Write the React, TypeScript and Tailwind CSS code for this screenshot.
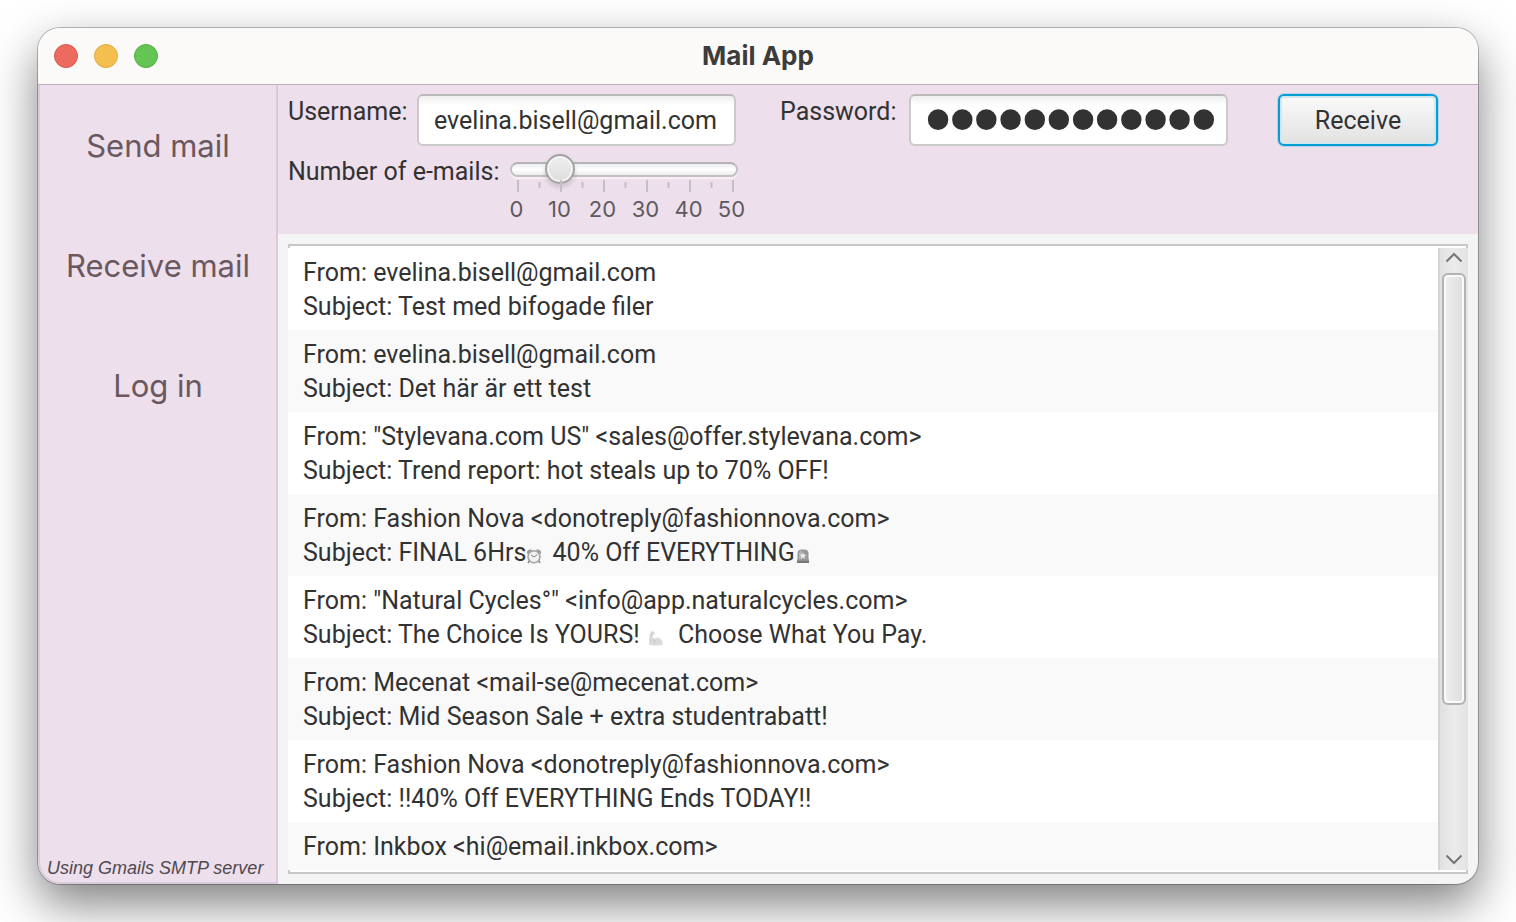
import { useState } from "react";
import type { ReactNode } from "react";

function AlarmClock() {
  return (
    <svg viewBox="0 0 16 16" className="mr-1 inline-block size-4 align-[-3px]" aria-label="alarm clock">
      <path d="M1 5.500C.4 2.500 3.500.8 6 2L2.300 6zM15 5.500C15.600 2.500 12.500.8 10 2l3.700 4z" fill="#9a9a9a" />
      <path d="M3.500 12.500 2 15M12.500 12.500 14 15" stroke="#888" strokeWidth="1.500" />
      <circle cx="8" cy="8.800" r="6" fill="#f1f1f1" stroke="#a2a2a2" strokeWidth="1.600" />
      <path d="M5 7l3 2 3.500-2.500" fill="none" stroke="#777" strokeWidth=".9" />
    </svg>
  );
}

function Siren() {
  return (
    <svg viewBox="0 0 14 16" className="ml-px inline-block h-4 w-3.5 align-[-3px]" aria-label="siren">
      <path d="M1.500 12V5c0-2 1.500-3.500 4-3.500h3c2.500 0 4 1.500 4 3.500v7z" fill="#999" />
      <path d="M3 11V5c0-1.500 1-2.300 3-2.300V11z" fill="#b5b5b5" />
      <path d="m7 4 .9 2.500 2.600.3-2 1.600.5 2.600L7 9.600 4.900 11l.6-2.600-2-1.600 2.600-.3z" fill="#ececec" />
      <path d="M1 11.500h12V15H1z" fill="#777" />
      <path d="M1 12h12" stroke="#aaa" />
    </svg>
  );
}

function FlexedArm() {
  return (
    <svg viewBox="0 0 16 16" className="mx-2 inline-block size-4 align-[-3px]" aria-label="flexed arm">
      <path
        d="M2.500 2.500C3 1 5.500.8 6.500 2c.6.900.3 2.300-.7 2.600l-1 .5.7 4.200C7 7.500 10.500 7 12.500 9c2 1.600 2.800 3.900 2 5.500-3.500 1.300-9.500 1.200-13.200.2C.6 11 1 6 2.500 2.500z"
        fill="#dadada"
      />
      <path d="M5.500 9.300c.3 1.200 1 1.700 2 1.700M4.600 4.800l-1.300-.6" fill="none" stroke="#b2b2b2" strokeWidth=".8" />
    </svg>
  );
}

type Mail = { from: string; subject: ReactNode };

const mails: Mail[] = [
  { from: "evelina.bisell@gmail.com", subject: "Test med bifogade filer" },
  { from: "evelina.bisell@gmail.com", subject: "Det här är ett test" },
  { from: '"Stylevana.com US" <sales@offer.stylevana.com>', subject: "Trend report: hot steals up to 70% OFF!" },
  {
    from: "Fashion Nova <donotreply@fashionnova.com>",
    subject: (
      <>
        FINAL 6Hrs
        <AlarmClock /> 40% Off EVERYTHING
        <Siren />
      </>
    ),
  },
  {
    from: '"Natural Cycles°" <info@app.naturalcycles.com>',
    subject: (
      <>
        The Choice Is YOURS!
        <FlexedArm /> Choose What You Pay.
      </>
    ),
  },
  { from: "Mecenat <mail-se@mecenat.com>", subject: "Mid Season Sale + extra studentrabatt!" },
  { from: "Fashion Nova <donotreply@fashionnova.com>", subject: "‼40% Off EVERYTHING Ends TODAY‼" },
  { from: "Inkbox <hi@email.inkbox.com>", subject: "" },
];

const navItems = ["Send mail", "Receive mail", "Log in"];
const scale = [0, 10, 20, 30, 40, 50];

const fieldClass =
  "h-[52px] w-[319px] rounded-md border-2 border-[#cacaca] border-t-[#b9b9b9] bg-white bg-linear-to-b from-[#f0f0f0] to-white to-20% pr-2 pl-[15px] text-[#323232] outline-none";

function CountSlider() {
  const [count, setCount] = useState(10);
  return (
    <div className="w-[258px]">
      <div className="grid items-center justify-items-center">
        <div className="h-[15px] w-[228px] rounded-full border-2 border-[#c2bfc2] border-t-[#b6b3b6] bg-linear-to-b from-[#ececec] via-white to-[#ececec] shadow-[0_2px_0_#f6eff6] [grid-area:1/1]" />
        <input
          id="count"
          type="range"
          min={0}
          max={50}
          value={count}
          onChange={(e) => setCount(Number(e.target.value))}
          className="h-[30px] w-[245px] cursor-pointer appearance-none bg-transparent outline-none [grid-area:1/1] [&::-webkit-slider-thumb]:size-[30px] [&::-webkit-slider-thumb]:appearance-none [&::-webkit-slider-thumb]:rounded-full [&::-webkit-slider-thumb]:border-2 [&::-webkit-slider-thumb]:border-[#a3a3a3] [&::-webkit-slider-thumb]:bg-linear-to-b [&::-webkit-slider-thumb]:from-[#f0f0f0] [&::-webkit-slider-thumb]:to-[#dcdcdc] [&::-webkit-slider-thumb]:shadow-[0_3px_5px_rgba(0,0,0,0.15),inset_0_0_0_2px_#f4f4f4]"
        />
      </div>
      <svg viewBox="0 0 258 12" className="-mt-1 h-3 w-full" aria-hidden="true">
        {scale.map((v) => (
          <path key={v} d={`M${23 + v * 4.3} 0v12`} stroke="#c3bfc3" strokeWidth="2" />
        ))}
        {scale.slice(0, 5).map((v) => (
          <path key={v} d={`M${44.5 + v * 4.3} 2v6`} stroke="#c3bfc3" strokeWidth="2" />
        ))}
      </svg>
      <div className="mt-1 grid grid-cols-6 text-center font-['Inter',sans-serif] text-[22px] leading-[26px] text-[#5e5a5e]">
        {scale.map((v) => (
          <span key={v}>{v}</span>
        ))}
      </div>
    </div>
  );
}

function Chevron({ up }: { up?: boolean }) {
  return (
    <svg viewBox="0 0 18 12" className="h-3 w-[18px]" aria-hidden="true">
      <path d={up ? "M1.500 10.500 9 3l7.500 7.500" : "M1.500 1.500 9 9l7.500-7.500"} fill="none" stroke="#757575" strokeWidth="2" />
    </svg>
  );
}

export default function App() {
  const [user, setUser] = useState("evelina.bisell@gmail.com");
  const [password, setPassword] = useState("abcdefghijkl");

  return (
    <div className="h-screen overflow-hidden bg-white px-[38px] pt-7 pb-[38px] font-['Roboto',sans-serif] text-[25px] leading-[34px] text-[#323232]">
      <div className="flex h-full flex-col overflow-hidden rounded-[22px] bg-[#f4f4f4] shadow-[0_0_0_1px_rgba(0,0,0,0.25),0_20px_48px_rgba(0,0,0,0.5)]">
        <header className="grid h-[57px] shrink-0 grid-cols-[1fr_auto_1fr] items-center border-b border-[#bfaebf] bg-[#fbfaf8] px-4">
          <div className="flex gap-4">
            <button aria-label="Close" className="size-6 rounded-full border border-[#d8584d] bg-[#ec6a5e]" />
            <button aria-label="Minimize" className="size-6 rounded-full border border-[#dfa842] bg-[#f4bf4f]" />
            <button aria-label="Zoom" className="size-6 rounded-full border border-[#54ad43] bg-[#65c554]" />
          </div>
          <h1 className="font-['Inter',sans-serif] text-[26px] font-bold text-[#3d3c3b]">Mail App</h1>
        </header>

        <div className="flex min-h-0 flex-1">
          <nav className="flex w-60 shrink-0 flex-col items-center rounded-bl-[22px] border-2 border-t-0 border-[#dacbda] bg-[#eddfec] pt-[31px]">
            {navItems.map((item) => (
              <button key={item} className="mb-[60px] h-[60px] font-['Inter',sans-serif] text-[31px] text-[#6b585e]">
                {item}
              </button>
            ))}
            <p className="mt-auto mr-auto pb-0.5 pl-[7px] font-['Liberation_Sans',sans-serif] text-[18px] leading-6 text-[#4f4a4f] italic">
              Using Gmails SMTP server
            </p>
          </nav>

          <main className="flex min-w-0 flex-1 flex-col">
            <form className="h-[149px] shrink-0 bg-[#eddfec] pt-[9px] pl-[10px]" onSubmit={(e) => e.preventDefault()}>
              <div className="flex items-start">
                <label htmlFor="user" className="w-[129px] shrink-0 pt-px">
                  Username:
                </label>
                <input id="user" type="text" value={user} onChange={(e) => setUser(e.target.value)} className={fieldClass} />
                <label htmlFor="password" className="ml-11 w-[129px] shrink-0 pt-px">
                  Password:
                </label>
                <input
                  id="password"
                  type="password"
                  value={password}
                  onChange={(e) => setPassword(e.target.value)}
                  className={fieldClass + " font-['Liberation_Serif',serif] text-[69px] leading-[48px] [-webkit-text-stroke:4px_#323232]"}
                />
                <button
                  type="submit"
                  className="ml-[50px] h-[52px] w-40 rounded-md border-2 border-[#039ed3] bg-linear-to-b from-[#fafafa] to-[#e2e2e2] pt-px shadow-[0_0_0_1px_#b9d2ea,inset_0_0_0_2px_#d3e6ec]"
                >
                  Receive
                </button>
              </div>
              <div className="mt-2 flex items-start">
                <label htmlFor="count" className="w-[207px] shrink-0 pt-px whitespace-nowrap">
                  Number of e-mails:
                </label>
                <CountSlider />
              </div>
            </form>

            <section className="m-[10px] flex min-h-0 flex-1 border-2 border-[#c8c8c8] bg-white py-0.5">
              <ul className="-ml-0.5 min-w-0 flex-1 overflow-hidden">
                {mails.map((mail, i) => (
                  <li key={i} className="h-[82px] px-[15px] pt-2 pb-1.5 whitespace-nowrap odd:bg-white even:bg-[#f9f9f9]">
                    <p>From: {mail.from}</p>
                    <p>Subject: {mail.subject}</p>
                  </li>
                ))}
              </ul>
              <div className="-mr-0.5 flex w-[30px] shrink-0 flex-col items-center border-l-2 border-[#d4d4d4] bg-linear-to-r from-[#e1e1e1] via-[#ebebeb] to-[#e3e3e3]">
                <button type="button" aria-label="Scroll up" className="flex h-[25px] shrink-0 items-start pt-[3px]">
                  <Chevron up />
                </button>
                <div className="h-[432px] w-6 rounded-md border-2 border-[#b3b3b3] bg-linear-to-r from-[#f0f0f0] to-[#dcdcdc] shadow-[inset_0_0_0_2px_#fafafa]" />
                <button type="button" aria-label="Scroll down" className="mt-auto flex h-4 items-start">
                  <Chevron />
                </button>
              </div>
            </section>
          </main>
        </div>
      </div>
    </div>
  );
}
